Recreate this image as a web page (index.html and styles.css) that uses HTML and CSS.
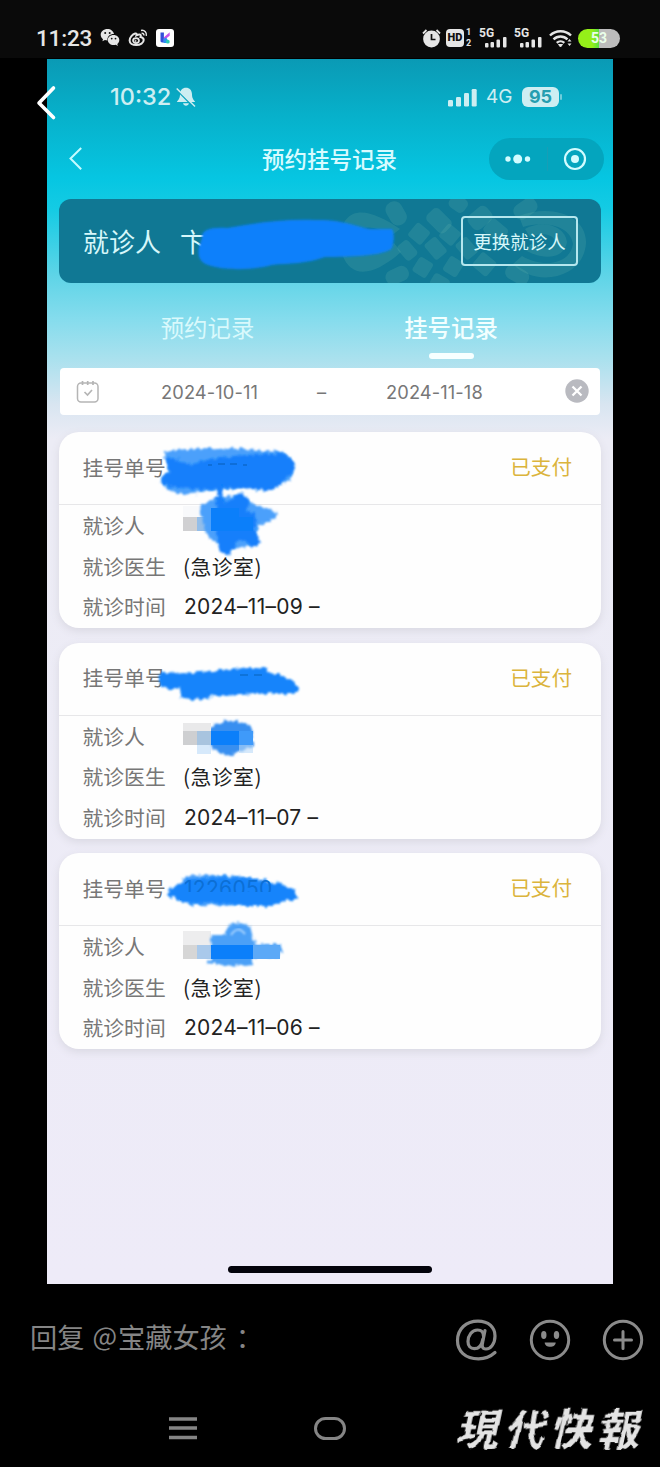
FILE: index.html
```html
<!DOCTYPE html>
<html lang="zh-CN">
<head>
<meta charset="utf-8">
<title>预约挂号记录</title>
<link rel="stylesheet" href="styles.css">
</head>
<body>
<svg class="defs" width="0" height="0" aria-hidden="true">
  <defs>
    <filter id="rough" x="-10%" y="-20%" width="120%" height="140%">
      <feTurbulence type="fractalNoise" baseFrequency="0.22" numOctaves="2" seed="4" result="n"/>
      <feDisplacementMap in="SourceGraphic" in2="n" scale="7" xChannelSelector="R" yChannelSelector="G"/>
      <feGaussianBlur stdDeviation="0.8"/>
    </filter>
    <filter id="brush" x="-5%" y="-10%" width="110%" height="120%">
      <feTurbulence type="fractalNoise" baseFrequency="0.06" numOctaves="1" seed="9" result="n"/>
      <feMorphology in="SourceGraphic" operator="dilate" radius="0.4" result="m"/>
      <feDisplacementMap in="m" in2="n" scale="8" xChannelSelector="R" yChannelSelector="G"/>
      <feGaussianBlur stdDeviation="0.4"/>
    </filter>
    <filter id="soft" x="-10%" y="-20%" width="120%" height="140%"><feGaussianBlur stdDeviation="1.2"/></filter>
  </defs>
</svg>
<header class="system-bar">
  <span class="system-time">11:23</span>
  <svg class="wechat" width="20" height="20" viewBox="0 0 20 20" fill="#e6e6e6"><path d="M7.500 1C3.600 1 .7 3.500.7 6.800c0 1.800.9 3.300 2.300 4.400L2.400 13.300l2.500-1.200c.8.300 1.700.4 2.500.4C7 8.700 9.800 6 14 6 13.400 3.100 10.800 1 7.500 1Z"/><path d="M13.600 7c-3.300 0-5.800 2.200-5.800 5s2.500 5.100 5.800 5.100c.8 0 1.500-.1 2.200-.3l2 1.100-.5-1.900c1.200-.9 2-2.400 2-4 0-2.800-2.500-5-5.700-5Z"/><g fill="#111"><circle cx="5.200" cy="5" r="1"/><circle cx="9.700" cy="5" r="1"/><circle cx="11.700" cy="10.600" r=".9"/><circle cx="15.500" cy="10.600" r=".9"/></g></svg>
  <svg class="weibo" width="20" height="18" viewBox="0 0 20 18" fill="none" stroke="#e6e6e6"><path stroke-width="2" d="M12.500 8c.6-1.400.4-2.300-.7-2.400-1-.1-2.300.3-3.300.8.5-1.500 0-2.300-1.300-1.900C4.600 5.300 1.600 8.600 1.600 11.500c0 2.800 3 4.600 6.600 4.600 4.200 0 7.500-2.300 7.500-5 0-1.600-1.200-2.700-3.200-3.100Z"/><ellipse cx="8" cy="11.600" rx="3" ry="2.500" stroke-width="1.700"/><circle cx="7.500" cy="12" r=".7"/><path stroke-width="1.500" d="M13 1.400c3.600-.6 6.100 2.100 5.300 5.500M13.600 4.200c1.600-.1 2.500.8 2.200 2.300"/></svg>
  <svg class="kapp" width="18" height="18" viewBox="0 0 18 18"><rect width="18" height="18" rx="3" fill="#fff"/><path d="M4.500 3.500h3.400v10H6.200c-1.200 0-1.700-.6-1.700-1.700Z" fill="#334fd8"/><path d="M13.700 3.200v3.500L8 11V8.300Z" fill="#c651e8"/><path d="m7.500 10 2.700-1.500 1.500 2.500-1 3H7.500Z" fill="#2d8ff0"/><circle cx="11.800" cy="12.700" r="1.900" fill="#28cbb5"/></svg>
  <div class="system-icons">
    <svg width="19" height="20" viewBox="0 0 19 20"><circle cx="9.500" cy="11" r="8.400" fill="#e6e6e6"/><path d="M9.500 6v5.500h4" fill="none" stroke="#111" stroke-width="1.700"/><path d="M1 5.500 4.500 2M18 5.500 14.500 2" stroke="#e6e6e6" stroke-width="1.800"/></svg>
    <span class="hd"><b>HD</b><span><i>1</i><i>2</i></span></span>
    <span class="cell"><b>5G</b><svg width="22" height="11" viewBox="0 0 22 11" fill="#e6e6e6"><rect y="6" width="3.500" height="4.500" rx="1"/><rect x="5.500" y="5" width="3.500" height="5.500" rx="1"/><rect x="11.500" y="2.500" width="3.500" height="8" rx="1"/><rect x="18" width="3.500" height="10.500" rx="1"/></svg></span>
    <span class="cell second"><b>5G</b><svg width="22" height="11" viewBox="0 0 22 11" fill="#e6e6e6"><rect y="6" width="3.500" height="4.500" rx="1"/><rect x="5.500" y="5" width="3.500" height="5.500" rx="1"/><rect x="11.500" y="2.500" width="3.500" height="8" rx="1"/><rect x="18" width="3.500" height="10.500" rx="1"/></svg></span>
    <svg class="wifi" width="24" height="19" viewBox="0 0 24 19" fill="none" stroke="#e6e6e6" stroke-width="2.400"><path d="M1 6.500c5.800-5.700 15.300-5.700 21 0M4.500 10.400c4-3.900 10-3.900 14 0M7.800 13.900c2.200-2.100 5.300-2.100 7.500 0"/><path d="m9.500 15.500 2 2.500 2-2.500Z" fill="#e6e6e6" stroke-width="1"/><path d="m18.500 12.500 2-2.500 2 2.500ZM18.500 14.500l2 2.500 2-2.500Z" fill="#e6e6e6" stroke="none"/></svg>
    <span class="battery">53</span>
  </div>
</header>

<main class="viewer">
  <svg class="viewer-back" width="20" height="36" viewBox="0 0 20 36"><path d="M17.500 3 3 18l14.500 14.500" fill="none" stroke="#fff" stroke-width="3.600" stroke-linecap="round" stroke-linejoin="round"/></svg>
  <section class="phone">
    <div class="phone-status">
      <span class="phone-time">10:32</span>
      <svg class="bell" width="20" height="20" viewBox="0 0 20 20"><path d="M10 .7c-3.600 0-6 2.700-6 6.500 0 4-1.300 5-3.200 7.800h18.400C17.300 12.200 16 11.200 16 7.200 16 3.400 13.600.7 10 .7ZM7 16.300c.6 3.200 5.400 3.200 6 0Z" fill="#cdeef2"/><path d="M1 3.300 17.500 20" stroke="#0aa2bd" stroke-width="1.500"/><path d="M.7 1.500 19 19.500" stroke="#cdeef2" stroke-width="1.500"/></svg>
      <div class="phone-right">
        <svg width="29" height="19" viewBox="0 0 29 19" fill="#cdeef2"><rect y="12" width="5" height="6.500" rx="1.300"/><rect x="8" y="9" width="5" height="9.500" rx="1.300"/><rect x="16" y="5" width="5" height="13.500" rx="1.300"/><rect x="23.700" y="1" width="5" height="17.500" rx="1.300"/></svg>
        <span class="net">4G</span>
        <span class="phone-battery">95</span><i class="nub"></i>
      </div>
    </div>
    <div class="nav">
      <svg width="14" height="24" viewBox="0 0 14 24"><path d="M13.200 1 2.500 11.500l10.700 10.700" fill="none" stroke="#c5fbff" stroke-width="2"/></svg>
      <h1>预约挂号记录</h1>
      <div class="capsule">
        <svg width="26" height="12" viewBox="0 0 26 12" fill="#d3fcff"><circle cx="3" cy="6" r="2.700"/><circle cx="12.700" cy="6" r="4.500"/><circle cx="22.500" cy="6" r="2.700"/></svg>
        <i></i>
        <svg width="24" height="24" viewBox="0 0 24 24"><circle cx="12" cy="12" r="10" fill="none" stroke="#d3fcff" stroke-width="2.200"/><circle cx="12" cy="12" r="4" fill="#d3fcff"/></svg>
      </div>
    </div>

    <div class="banner">
      <svg class="pattern" width="270" height="84" viewBox="0 0 270 84" fill="#7fc8b4" fill-opacity=".16">
        <path fill-rule="evenodd" d="M8 42C12 2 40 10 69 30l-9 7C43 26 27 24 22 42c5 17 20 14 41 2l7 9C42 78 14 84 8 42Z"/>
        <path fill-rule="evenodd" d="M188 17c33-13 68 0 67 27-2 36-51 45-73 21l9-8c20 12 48 9 51-12-2-18-28-24-50-17Z"/>
        <path d="M194 30c18-10 40-3 42 13-3 18-25 18-42 8l6-6c12 6 22 5 25-2-4-10-17-9-26-5Z"/>
        <g>
          <rect x="57" y="2" width="17" height="25" rx="8" transform="rotate(-30 65 15)"/><rect x="96" y="13" width="25" height="17" rx="5" transform="rotate(45 108 21)"/><rect x="118" y="-3" width="18" height="15" rx="5" transform="rotate(35 127 5)"/><rect x="137" y="10" width="24" height="18" rx="6" transform="rotate(-40 149 19)"/><rect x="80" y="26" width="17" height="17" rx="3" transform="rotate(40 88 34)"/><rect x="111" y="27" width="17" height="17" rx="3" transform="rotate(40 119 35)"/><rect x="154" y="23" width="22" height="17" rx="4" transform="rotate(40 165 31)"/><rect x="95" y="42" width="20" height="15" rx="3" transform="rotate(50 105 49)"/><rect x="126" y="42" width="20" height="15" rx="3" transform="rotate(50 136 49)"/><rect x="67" y="44" width="19" height="14" rx="4" transform="rotate(50 76 51)"/><rect x="84" y="60" width="16" height="17" rx="3" transform="rotate(32 92 68)"/><rect x="114" y="59" width="16" height="17" rx="3" transform="rotate(32 122 68)"/><rect x="144" y="56" width="19" height="18" rx="3" transform="rotate(40 153 65)"/><rect x="54" y="69" width="24" height="15" rx="7" transform="rotate(-25 66 76)"/><rect x="100" y="76" width="18" height="14" rx="4" transform="rotate(30 108 83)"/><rect x="182" y="2" width="25" height="16" rx="7" transform="rotate(-35 194 10)"/><rect x="174" y="68" width="25" height="15" rx="7" transform="rotate(30 186 75)"/>
        </g>
      </svg>
      <span class="patient-label">就诊人</span><span class="patient-name">卞</span>
      <svg class="scribble banner-scribble" width="200" height="60" viewBox="0 0 200 60" fill="#0b80fb"><path filter="url(#soft)" d="M6 22c-1-8 8-11 25-10 28-5 56-9 87-8 27-1 41 6 56 9h22c3 3 2 20-2 21-12 6-39 7-65 7-19 7-34 6-53 8-16 5-48 6-64 0C1 46 2 35 3 31Z"/></svg>
      <button class="change">更换就诊人</button>
    </div>

    <div class="tabs"><span>预约记录</span><span class="active">挂号记录</span></div>

    <div class="dates">
      <svg width="24" height="24" viewBox="0 0 24 24" fill="none" stroke="#b5b5b5" stroke-width="1.500"><rect x="1.500" y="3" width="20.500" height="19" rx="3.500"/><path d="M6.500 1v4M11.700 1v4M17 1v4" stroke-width="1.700"/><path d="m8.500 12 3 3 4.500-5" stroke-width="1.700"/></svg>
      <span class="from">2024-10-11</span><span class="dash">–</span><span class="to">2024-11-18</span>
      <svg class="clear" width="24" height="24" viewBox="0 0 24 24"><circle cx="12" cy="12" r="11.700" fill="#b9bac0"/><path d="m7.500 7.500 9 9m0-9-9 9" stroke="#fff" stroke-width="2.300"/></svg>
    </div>

    <div class="records">
      <article class="card">
        <div class="card-head"><span>挂号单号</span><b>已支付</b></div>
        <dl><dt>就诊人</dt><dd></dd><dt>就诊医生</dt><dd>(急诊室)</dd><dt>就诊时间</dt><dd class="num">2024–11–09 –</dd></dl>
        <svg class="scribble" width="170" height="130" viewBox="0 0 170 130">
          <path d="M33 74h28v11H33Z" fill="#f8f9fb"/><path fill="#d0d0d2" d="M33 85h14v14H33Z"/><path fill="#94bee9" d="M47 85h14v14H47Z"/>
          <g fill="#4ba0fb" filter="url(#rough)"><path d="M15 20c24-5 62-4 93-2 18 0 32 3 34 8v22c-24 6-58 8-90 12-12 4-29 3-39-7-3-8 3-9 5-13Z"/><path d="M50 75c8-8 20-9 34-12 12 7 24 10 44 17-3 9-14 10-20 14l-6 20c-12 3-24 1-33-2-8-2-15-12-16-22Z"/></g>
          <g fill="#127ffb" filter="url(#rough)"><path d="M14 25c12-1 17 7 29 7 25-9 62-10 88-10 8-1 13 7 14 13-2 7-12 12-16 19-7 6-15 5-21 4-16-3-31-2-47-2-14 3-36 0-49-4-4-5 1-8 8-12Z"/><path d="M62 50h10l1 20c7 1 9-4 17-10l9 9-1 11h7v17l6 14-9 4-9-8c-8 0-9 10-15 18l-7-5-4-14V50Z"/></g>
          <path fill="#0b7ffa" d="M61 76h28v9h14v14H61Z"/>
          <path d="M58 33h4m6-1h7m5 0h7m6 1h4" stroke="#075fb8" stroke-width="1.200"/>
        </svg>
      </article>
      <article class="card">
        <div class="card-head"><span>挂号单号</span><b>已支付</b></div>
        <dl><dt>就诊人</dt><dd></dd><dt>就诊医生</dt><dd>(急诊室)</dd><dt>就诊时间</dt><dd class="num">2024–11–07 –</dd></dl>
        <svg class="scribble" width="170" height="130" viewBox="0 0 170 130">
          <path fill="#1684fb" filter="url(#rough)" d="M10 30c19-1 45 0 61-3 17-2 32-3 43-1 9 4 15 5 22 8 4 4 10 4 12 12-3 8-12 5-19 4-22 0-40 3-64 3-12 2-25 7-35 1V45c-7 2-17 2-20-5Z"/>
          <path fill="#398ff0" filter="url(#rough)" d="M60 86c4-10 38-12 43 0v18c-8 2-17 4-22 9-8-2-15-5-21-9Z"/>
          <path fill="#e9e9ea" d="M33 80h28v8H33Z"/><path fill="#cecfd1" d="M33 88h14v14H33Z"/><path fill="#a8c4df" d="M47 88h14v14H47Z"/><path fill="#0b7ffa" d="M61 88h28v14H61Z"/><path fill="#3f9afa" d="M89 88h14v14H89Z"/><path fill="#badaf9" opacity=".6" d="M47 102h14v9H47ZM89 102h14v8H89Z"/>
          <path d="M90 32h8m6 0h8" stroke="#0763b9" stroke-width="1.200"/>
        </svg>
      </article>
      <article class="card">
        <div class="card-head"><span>挂号单号</span><b>已支付</b></div>
        <dl><dt>就诊人</dt><dd></dd><dt>就诊医生</dt><dd>(急诊室)</dd><dt>就诊时间</dt><dd class="num">2024–11–06 –</dd></dl>
        <svg class="scribble" width="170" height="130" viewBox="0 0 170 130">
          <path fill="#4ba0fb" filter="url(#rough)" d="M33 26c6-5 18-5 55-3l28 5-5 22c-24 4-52 3-72 1Z"/>
          <path fill="#1684fb" filter="url(#rough)" d="M19 38c7-4 13-12 23-12 20-2 38-2 53-1 14 2 28 4 37 6 6 3 10 4 14 6v9c-11 0-18 5-28 7-21 1-43-3-64-4-12 3-16 0-26-1-6-4-11-4-10-10Z"/>
          <text x="34" y="43" fill="#0c6fd5">1226050</text>
          <path fill="#1684fb" d="M30 39h96v8H30Z"/>
          <path fill="#ededee" d="M33 78h28v14H33Z"/><path fill="#d6d6d6" d="M33 92h14v14H33Z"/><path fill="#a9c9eb" d="M47 92h14v14H47Z"/>
          <path fill="#4ba0f7" filter="url(#rough)" d="M61 82h14c2-14 19-17 26-6l4 15h26v13h-28v8c-16 2-31 0-46-2l5-8Z"/>
          <path fill="#0b7ffa" d="M61 92h42v14H61Z"/><path fill="#5ca9f7" d="M103 92h27v14h-27Z"/><path d="M81 82c5-7 9-7 14-1" fill="none" stroke="#a9d4ff" stroke-width="2" filter="url(#soft)"/>
        </svg>
      </article>
    </div>
    <i class="home"></i>
  </section>
</main>

<footer>
  <div class="reply">
    <span>回复 <b>@</b>宝藏女孩<em>：</em></span>
    <div class="reply-icons">
      <svg width="42" height="42" viewBox="0 0 42 42" fill="none" stroke="#8b8b8b" stroke-width="3.200" stroke-linecap="round"><path d="M40 33.500C35 38 30 39.800 23.500 39.800 10 39.800 2.500 32 2.500 21.500 2.500 10 11 2.200 23 2.200c10.500 0 17 6 17 14.800 0 7.500-4.300 13-9 13-4 0-4.300-3-3.300-7L30 11.500"/><path d="M28.500 17c0-4-2.500-6-6-6-5.500 0-9.500 5.500-9.500 11.500 0 4.500 2.500 7.200 6.200 7.200 4.500 0 7.500-3.500 8.500-9"/></svg>
      <svg width="42" height="42" viewBox="0 0 42 42"><circle cx="21" cy="21" r="18.700" fill="none" stroke="#8b8b8b" stroke-width="3"/><ellipse cx="14.800" cy="16" rx="2.700" ry="4" fill="#8b8b8b"/><ellipse cx="27.500" cy="16" rx="2.700" ry="4" fill="#8b8b8b"/><path d="M15.700 23.500h11c0 2.700-2.500 4.300-5.500 4.300s-5.500-1.600-5.500-4.300Z" fill="#8b8b8b"/></svg>
      <svg width="42" height="42" viewBox="0 0 42 42" fill="none" stroke="#8b8b8b" stroke-width="3" stroke-linecap="round"><circle cx="21" cy="21" r="18.700"/><path d="M21 12.500v17M12.500 21h17"/></svg>
    </div>
  </div>
  <div class="bottom">
    <svg class="menu" width="28" height="24" viewBox="0 0 28 24" stroke="#858585" stroke-width="3.500"><path d="M0 3h28M0 12h28M0 21.500h28"/></svg>
    <i class="home-key"></i>
    <div class="brand"><span>現</span><span>代</span><span>快</span><span>報</span></div>
  </div>
</footer>
</body>
</html>
```
FILE: styles.css
```css
* { box-sizing: border-box; }
body {
  margin: 0; width: 660px; height: 1467px; overflow: hidden;
  background: #000; color: #777;
  font-family: Inter, "Noto Sans CJK SC", sans-serif;
}
svg { display: block; flex: none; overflow: visible; }
i, em { font-style: normal; }
.defs { position: absolute; }

.system-bar { height: 58px; padding: 18px 40px 0 36px; background: #0a0a0a; display: flex; align-items: center; color: #e6e6e6; }
.system-time { width: 64px; font: 500 22.5px/40px Roboto, sans-serif; letter-spacing: -.2px; }
.weibo { margin-left: 8px; }
.kapp { margin-left: 8px; }
.system-icons { margin-left: auto; display: flex; align-items: center; }
.hd { display: flex; align-items: center; margin-left: 5px; width: 33px; }
.hd b { width: 18px; height: 18px; border-radius: 4px; background: #e6e6e6; color: #111; font: 900 11px/18px Roboto, sans-serif; text-align: center; }
.hd span { display: flex; flex-direction: column; margin-left: 2px; }
.hd i { font: 700 9px/11px Roboto, sans-serif; height: 11px; }
.cell { display: flex; flex-direction: column; width: 28px; height: 20px; }
.cell.second { margin-left: 7px; }
.cell b { font: 700 12px/10px Roboto, sans-serif; }
.cell svg { margin: -1px 0 0 6px; }
.wifi { margin-left: 7px; }
.battery { margin-left: 5px; width: 42px; height: 19px; border-radius: 10px; text-align: center; color: #eaffea; font: 700 14px/19px Roboto, sans-serif; background: linear-gradient(90deg, #95ef19 0 34%, #55dd45 50%, #bcbcbc 50%); }

.viewer { display: flex; height: 1226px; }
.viewer-back { margin: 27px -9px 0 36px; position: relative; z-index: 2; }
.phone {
  width: 566px; height: 1225px; margin-top: 1px; padding: 0 12px; display: flex; flex-direction: column;
  background: linear-gradient(180deg, #0a9ab5 0, #07b0ca 55px, #06c6e2 120px, #14cbe4 150px, #5dd4e7 215px, #85dced 260px, #aae1ee 300px, #d8e5f1 345px, #ececf5 380px, #eeebf8 100%);
}
.phone-status { height: 76px; padding: 0 39px 0 51px; display: flex; align-items: center; color: #cdeef2; }
.phone-time { font-size: 23.500px; font-weight: 500; line-height: 30px; width: 66px; white-space: nowrap; }
.phone-right { margin-left: auto; display: flex; align-items: center; }
.net { font: 400 19px/24px Inter, sans-serif; width: 27px; margin: 0 9px; }
.phone-battery { width: 37px; height: 20px; border-radius: 6px; background: #cdeef2; color: #259eb0; text-align: center; font-weight: 700; font-size: 18px; line-height: 20px; }
.nub { width: 2px; height: 6px; margin-left: 1px; border-radius: 2px; background: #70cddb; }
.nav { height: 64px; padding: 0 0 17px 9px; display: grid; grid-template-columns: 175px 1fr 116px; align-items: center; margin-right: -4px; }
.nav h1 { margin: -2px 0 0 19px; font: 500 22.500px/32px "Noto Sans CJK SC", sans-serif; color: #d7fbff; white-space: nowrap; }
.capsule { width: 115px; height: 42px; border-radius: 21px; background: #04a5be; display: flex; align-items: center; justify-content: space-between; padding: 0 17px 0 16px; }
.capsule i { width: 1px; height: 24px; background: #179eb6; margin-left: 12px; }
.capsule svg:last-child { margin-left: 12px; }

.banner { position: relative; height: 84px; flex: none; border-radius: 12px; background: #107894; overflow: hidden; display: flex; align-items: center; padding: 0 23px 0 24px; color: #d6f7fa; font: 400 26px/36px "Noto Sans CJK SC", sans-serif; }
.patient-name { margin-left: 19px; }
.pattern { position: absolute; right: 0; top: 0; }
.scribble { position: absolute; pointer-events: none; }
.banner-scribble { left: 137px; top: 17px; }
.change { position: relative; margin-left: auto; width: 117px; height: 50px; padding: 0; background: none; border: 2px solid #b5e7ee; border-radius: 4px; color: #d6f7fa; font: 400 18.500px/46px "Noto Sans CJK SC", sans-serif; }

.tabs { height: 85px; display: grid; grid-template-columns: 297px 190px; padding-top: 27px; justify-content: start; font: 400 23.400px/34px "Noto Sans CJK SC", sans-serif; color: #d9f9fc; text-align: center; }
.tabs .active { color: #f2ffff; font-weight: 500; display: flex; flex-direction: column; align-items: center; }
.tabs .active::after { content: ""; width: 45px; height: 6px; border-radius: 3px; margin-top: 9px; background: #f7ffff; flex: none; }
.dates { height: 47px; flex: none; margin: 0 1px; padding: 0 11px 0 16px; background: #fff; border-radius: 4px; display: grid; grid-template-columns: 85px 156px 69px 1fr 24px; align-items: center; font: 400 18.300px/24px Inter, sans-serif; letter-spacing: .1px; color: #777; }
.dates span { padding-top: 1px; }
.dates .clear { margin-top: -1px; }

.records { margin-top: 17px; display: flex; flex-direction: column; gap: 14.500px; }
.card { position: relative; height: 196px; border-radius: 20px; background: #fefefe; box-shadow: 0 3px 9px #d9d8e2; font: 400 20.800px/30px "Noto Sans CJK SC", sans-serif; color: #777; }
.card-head { height: 73px; border-bottom: 1.500px solid #e7e7e9; display: flex; justify-content: space-between; padding: 19.500px 29px 0 23.500px; }
.card-head b { color: #dbb43c; font-weight: 400; font-size: 20.600px; margin-top: -.500px; }
dl { margin: 0; padding: 0 0 0 23.500px; display: grid; grid-template-columns: 100.500px 1fr; grid-template-rows: repeat(3, 40.600px); align-items: center; }
dd { margin: 0; color: #222; letter-spacing: .5px; }
dt, dd { line-height: 30px; }
.num { font: 400 21px/30px Inter, sans-serif; padding: 2px 0 0 1px; white-space: nowrap; letter-spacing: .25px; }
.card .scribble { left: 91px; top: 0; }
.card .scribble text { font: 400 21px Inter, sans-serif; letter-spacing: .3px; }
.home { width: 204px; height: 7px; border-radius: 4px; background: #03030b; margin: auto auto 11px; }

.reply { height: 112px; padding: 0 16px 0 30px; display: flex; align-items: center; justify-content: space-between; color: #858585; }
.reply > span { font: 400 27.200px/36px "Noto Sans CJK SC", sans-serif; white-space: nowrap; margin-top: -9px; display: flex; }
.reply b { font: 400 26px/36px "Noto Sans CJK SC", sans-serif; margin: -1px 1px 0 8px; }
.reply em { margin-left: 9px; }
.reply-icons { display: flex; gap: 31.500px; }
.bottom { height: 71px; display: flex; align-items: flex-start; padding: 0 17px 0 169px; }
.menu { margin-top: 20px; }
.home-key { width: 32px; height: 23px; border: 3px solid #858585; border-radius: 12px; margin: 21px 0 0 117px; }
.brand { margin-left: auto; display: flex; color: #e3e3e3; font: 700 42px/50px "Noto Sans CJK TC", sans-serif; transform: skewX(-12deg); margin-top: 6px; gap: 5px; filter: url(#brush); }
```
